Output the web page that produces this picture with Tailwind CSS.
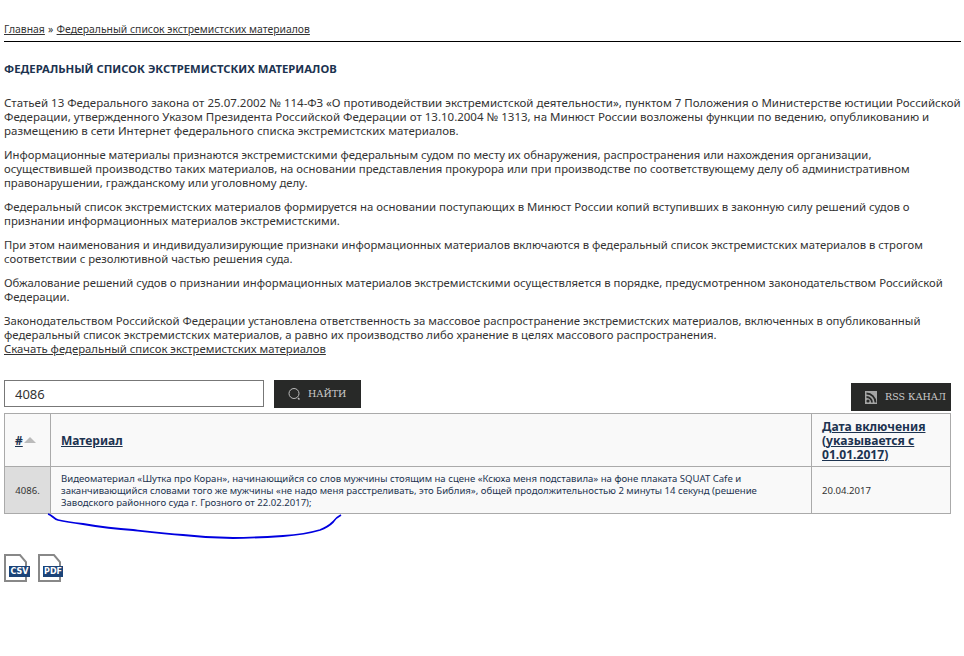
<!DOCTYPE html>
<html lang="ru">
<head>
  <meta charset="UTF-8">
  <title>Федеральный список экстремистских материалов</title>
  <script src="https://cdn.jsdelivr.net/npm/@tailwindcss/browser@4"></script>
</head>
<body class="relative w-[964px] h-[656px] overflow-hidden bg-white text-[#333] font-['Noto_Sans',sans-serif] text-[11.5px] leading-[14px]">
  <div class="pl-[4px] w-[961px] whitespace-nowrap">
    <div class="pt-[22px] h-[41px] text-[10.4px]">
      <a class="underline" href="#">Главная</a><span class="mx-[0.5px]"> » </span><a class="underline" href="#">Федеральный список экстремистских материалов</a>
    </div>
    <div class="h-px bg-black"></div>
    <h1 class="mt-[20px] font-bold text-[#1c3350] text-[11.3px]">ФЕДЕРАЛЬНЫЙ СПИСОК ЭКСТРЕМИСТСКИХ МАТЕРИАЛОВ</h1>

    <p class="mt-[20px] text-[11.5px]">Статьей 13 Федерального закона от 25.07.2002 № 114-ФЗ «О противодействии экстремистской деятельности», пунктом 7 Положения о Министерстве юстиции Российской<br>Федерации, утвержденного Указом Президента Российской Федерации от 13.10.2004 № 1313, на Минюст России возложены функции по ведению, опубликованию и<br>размещению в сети Интернет федерального списка экстремистских материалов.</p>
    <p class="mt-[10px] text-[11.3px]">Информационные материалы признаются экстремистскими федеральным судом по месту их обнаружения, распространения или нахождения организации,<br>осуществившей производство таких материалов, на основании представления прокурора или при производстве по соответствующему делу об административном<br>правонарушении, гражданскому или уголовному делу.</p>
    <p class="mt-[10px] text-[11.36px]">Федеральный список экстремистских материалов формируется на основании поступающих в Минюст России копий вступивших в законную силу решений судов о<br>признании информационных материалов экстремистскими.</p>
    <p class="mt-[10px] text-[11.29px]">При этом наименования и индивидуализирующие признаки информационных материалов включаются в федеральный список экстремистских материалов в строгом<br>соответствии с резолютивной частью решения суда.</p>
    <p class="mt-[10px] text-[11.3px]">Обжалование решений судов о признании информационных материалов экстремистскими осуществляется в порядке, предусмотренном законодательством Российской<br>Федерации.</p>
    <p class="mt-[10px] text-[11.34px]">Законодательством Российской Федерации установлена ответственность за массовое распространение экстремистских материалов, включенных в опубликованный<br>федеральный список экстремистских материалов, а равно их производство либо хранение в целях массового распространения.<br><a class="underline" href="#">Скачать федеральный список экстремистских материалов</a></p>

    <div class="mt-[24px] flex items-start w-[947px]">
      <input value="4086" class="w-[260px] h-[27px] border border-[#777] px-[10px] text-[13px] text-[#333] font-['Noto_Sans',sans-serif]">
      <button class="ml-[10px] w-[87px] h-[28px] pl-[14px] bg-[#282928] text-[#ccc] flex items-center gap-[7px] font-['DejaVu_Serif',serif] text-[9.5px]">
        <svg width="13" height="14" viewBox="0 0 13 14" fill="none" stroke="#bbb"><circle cx="6" cy="6.5" r="5"/><path d="M10 11l1.5 1.5" stroke-width="1.5"/></svg>
        НАЙТИ
      </button>
      <button class="ml-auto mt-[3px] w-[100px] h-[28px] bg-[#282928] text-[#ccc] flex items-center justify-end pr-[5px] gap-[8px] font-['DejaVu_Serif',serif] text-[9.5px]">
        <svg width="12" height="13" viewBox="0 0 12 13"><rect width="12" height="13" fill="#a5a5a5"/><circle cx="3" cy="10" r="1.6" fill="#282928"/><path d="M1.5 6a5.5 5.5 0 0 1 5.5 5.5M1.5 2.5a9 9 0 0 1 9 9" fill="none" stroke="#282928" stroke-width="1.8"/></svg>
        RSS КАНАЛ
      </button>
    </div>

    <table class="mt-[2px] w-[947px] table-fixed border-collapse border border-[#aaa] bg-[#f9f9f9] whitespace-normal">
      <thead>
        <tr class="h-[53px]">
          <th class="w-[46px] border border-[#aaa] pl-[10px] pt-[1px] text-left text-[12px] font-bold text-[#1c3350]"><a class="underline" href="#">#</a><span class="inline-block ml-[1px] align-[2px] border-x-[6px] border-x-transparent border-b-[6px] border-b-[#bbb]"></span></th>
          <th class="border border-[#aaa] pl-[10px] pt-[1px] text-left text-[12px] font-bold text-[#1c3350]"><a class="underline" href="#">Материал</a></th>
          <th class="w-[139px] border border-[#aaa] pl-[10px] pt-[1px] text-left text-[12.1px] leading-[14px] font-bold text-[#1c3350]"><a class="underline" href="#">Дата включения (указывается с 01.01.2017)</a></th>
        </tr>
      </thead>
      <tbody>
        <tr class="h-[47px] text-[9.57px] leading-[12px]">
          <td class="border border-[#aaa] bg-[#ddd] pt-[2px] text-center">4086.</td>
          <td class="border border-[#aaa] pl-[10px] pt-[2px] text-[#1c3350] whitespace-nowrap">Видеоматериал «Шутка про Коран», начинающийся со слов мужчины стоящим на сцене «Ксюха меня подставила» на фоне плаката SQUAT Cafe и<br>заканчивающийся словами того же мужчины «не надо меня расстреливать, это Библия», общей продолжительностью 2 минуты 14 секунд (решение<br>Заводского районного суда г. Грозного от 22.02.2017);</td>
          <td class="border border-[#aaa] pl-[10px] pt-[2px]">20.04.2017</td>
        </tr>
      </tbody>
    </table>

    <div class="mt-[40px] flex gap-[7px]">
      <svg width="27" height="28" viewBox="0 0 27 28"><path d="M1 27V1h15l6 7v19z" fill="#fff" stroke="#888" stroke-width="2"/><rect x="5" y="12" width="21" height="11" fill="#1b4378"/></svg>
      <svg width="27" height="28" viewBox="0 0 27 28"><path d="M1 27V1h15l6 7v19z" fill="#fff" stroke="#888" stroke-width="2"/><rect x="5" y="12" width="20" height="11" fill="#1b4378"/></svg>
    </div>
  </div>
  <div class="absolute left-[9px] top-[566px] w-[21px] h-[11px] font-['DejaVu_Sans',sans-serif] text-[8px] leading-[11px] font-bold text-white text-center">CSV</div>
  <div class="absolute left-[43px] top-[566px] w-[20px] h-[11px] font-['DejaVu_Sans',sans-serif] text-[8px] leading-[11px] font-bold text-white text-center">PDF</div>
  <svg class="absolute left-0 top-0 pointer-events-none" width="964" height="656" fill="none"><path d="M48 514 C52 515 54 519 58 520 C66 522 74 523 83 524 C100 527 116 529 133 530 C150 532 166 534 183 535 C200 537 216 538 233 538 C250 538 267 537 283 536 C297 535 310 533 320 530 C328 527 330 525 333 522 C335 519 337 517 341 515" stroke="#0000e0" stroke-width="1.8"/></svg>
</body>
</html>
